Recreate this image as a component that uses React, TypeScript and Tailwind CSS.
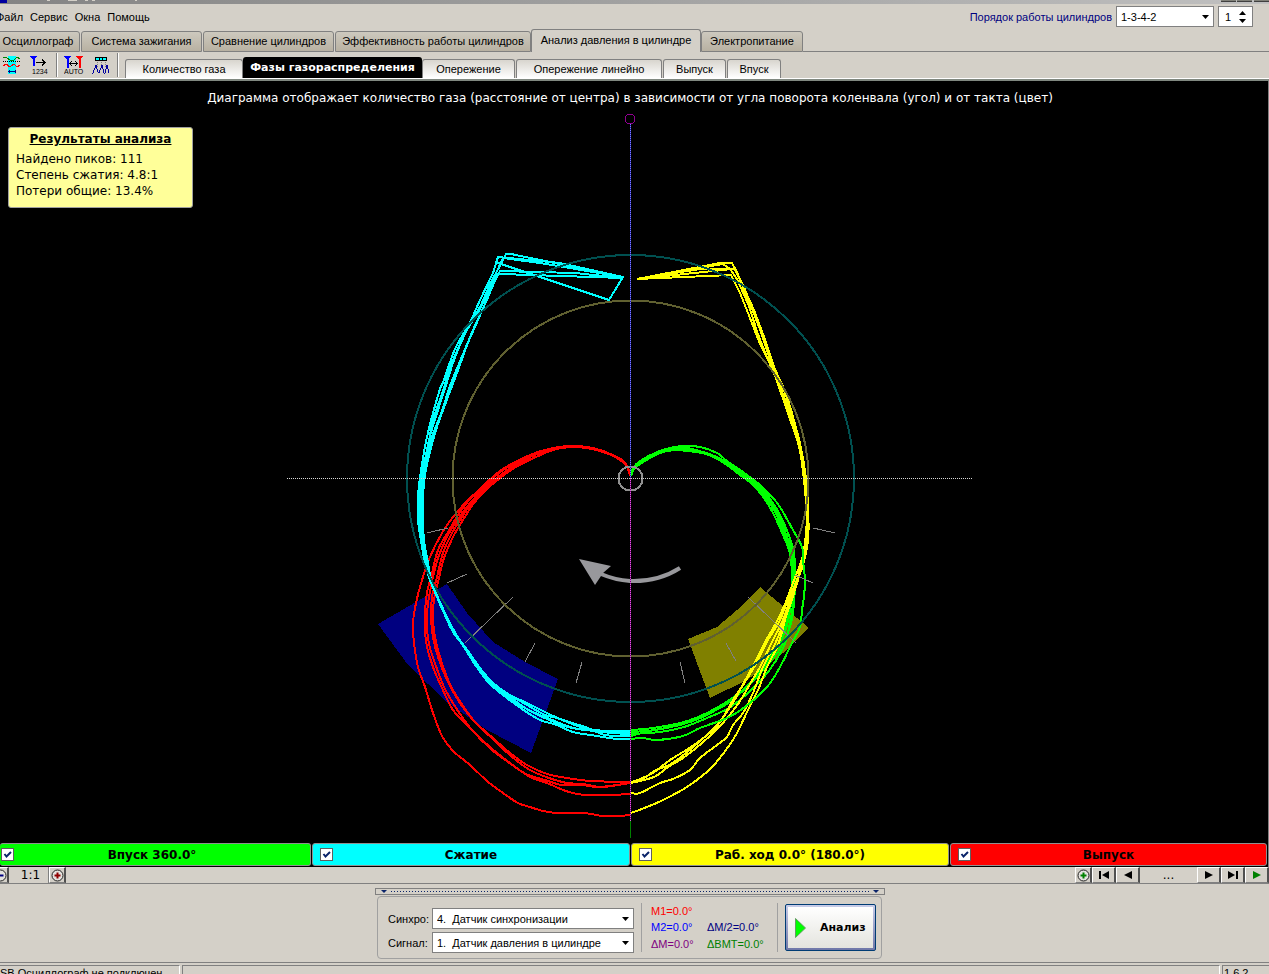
import { useState } from "react";
import type { ReactNode } from "react";

const mainTabs = [
  { label: "Осциллограф", width: "w-[84px]" },
  { label: "Система зажигания", width: "w-[121px]" },
  { label: "Сравнение цилиндров", width: "w-[131px]" },
  { label: "Эффективность работы цилиндров", width: "w-[196px]" },
  { label: "Анализ давления в цилиндре", width: "w-[170px]" },
  { label: "Электропитание", width: "w-[102px]" },
];

const subTabs = [
  { label: "Количество газа", width: "w-[118px]" },
  { label: "Фазы газораспределения", width: "w-[179px]" },
  { label: "Опережение", width: "w-[93px]" },
  { label: "Опережение линейно", width: "w-[146px]" },
  { label: "Выпуск", width: "w-[63px]" },
  { label: "Впуск", width: "w-[54px]" },
];

const strokes = [
  { label: "Впуск 360.0°", fill: "bg-[#00ff00]", first: true },
  { label: "Сжатие", fill: "bg-[#00ffff]", first: false },
  { label: "Раб. ход 0.0° (180.0°)", fill: "bg-[#ffff00]", first: false },
  { label: "Выпуск", fill: "bg-[#ff0000]", first: false },
];

const exhaust = [
  "630,476 628,468 622,460 612,455 603,451 587,447 570,446 553,449 537,454 517,463 503,470 483,487 468,500 453,517 442,533 430,557 422,580 416,603 413,623 414,643 418,667 425,687 433,713 442,736 453,751 470,765 487,781 503,793 518,803 530,807 543,811 557,813 583,813 603,816 618,816 630,815",
  "630,476 627,466 620,460 603,451 587,447 570,446 553,448 535,453 515,462 500,471 483,486 470,499 458,515 448,532 438,550 432,573 427,593 425,613 425,630 427,647 433,667 442,688 453,710 470,728 490,747 510,763 530,777 547,783 563,790 577,794 590,795 610,795 630,794",
  "630,476 627,466 622,460 603,451 587,447 570,446 553,449 538,456 517,465 505,473 489,486 474,500 462,517 452,533 443,553 437,577 432,597 431,617 433,637 438,657 447,680 458,700 473,720 493,738 510,753 527,765 547,774 567,778 590,781 630,782",
  "630,476 628,468 621,459 604,452 586,447 570,446 552,450 536,457 516,467 504,475 487,489 474,503 463,520 453,537 444,558 439,578 434,600 433,618 435,637 440,657 449,682 461,703 476,723 495,741 512,757 530,770 549,778 567,783 583,784 600,787 612,786 630,783",
  "630,476 628,468 621,460 603,452 586,448 570,447 553,450 536,457 514,466 502,474 484,488 471,502 458,519 447,537 438,558 433,577 429,597 427,614 427,630 430,648 437,669 445,689 456,708 472,730 492,750 508,762 526,774 545,780 562,785 582,785 600,787 630,783",
];

const compression = [
  "623,277 511,254 506,254 503,260 490,284 481,305 470,324 459,346 449,371 443,391 433,420 428,446 422,473 419,497 419,520 422,540 427,563 431,580 437,597 446,616 453,632 466,649 477,665 490,681 505,692 527,705 545,715 557,718 572,724 587,729 608,731 630,731",
  "623,277 560,263 498,257 493,273 480,300 469,325 455,349 444,380 439,392 427,437 420,477 418,497 418,520 421,541 425,563 430,580 437,597 444,613 452,630 464,647 474,663 488,682 503,695 522,709 540,720 557,725 573,732 597,736 617,739 630,739",
  "623,278 575,273 500,271 496,278 486,302 473,330 463,354 450,386 442,411 431,440 424,473 422,497 421,520 423,540 427,560 431,580 438,598 447,617 456,634 467,650 480,668 492,682 508,695 525,708 547,719 568,727 590,730 630,733",
  "623,278 500,274 498,274 490,292 478,320 467,345 457,373 446,402 436,430 428,460 425,475 423,497 423,520 424,540 428,563 431,580 437,597 444,613 453,630 465,648 476,664 489,679 506,693 529,704 551,715 563,720 588,728 605,735 630,736",
  "495,262 609,300 623,277 540,263 503,258 493,280 481,307 466,332 454,360 447,382 438,410 429,440 423,473 420,500 420,520 422,541 427,564 432,582 439,600 447,617 455,633 468,651 480,668 493,684 510,699 531,711 550,719 573,728 595,731 612,733 630,734",
];

const power = [
  "637,279 720,263 732,263 739,278 751,306 762,335 774,370 785,393 794,423 802,453 807,488 808,515 808,540 803,565 796,583 788,600 779,622 768,640 757,662 745,682 733,700 717,726 694,745 670,760 653,773 640,779 631,783",
  "637,279 723,264 730,269 737,279 749,306 759,337 772,369 783,394 793,423 801,450 806,489 808,510 807,540 801,562 793,583 785,604 776,623 765,642 754,664 742,686 731,706 715,727 692,748 671,764 656,770 644,778 631,782",
  "637,279 732,269 735,268 743,286 754,310 764,337 775,369 786,394 795,424 802,453 807,490 807,520 803,558 798,580 791,602 784,622 775,644 763,667 753,693 743,713 733,725 727,737 717,745 700,758 690,770 673,779 660,783 640,793 631,793",
  "637,279 731,275 740,293 750,318 760,344 772,368 780,390 791,422 800,450 805,488 808,509 808,540 802,565 795,585 789,604 784,624 778,645 767,667 758,690 748,710 737,733 728,747 719,759 708,771 687,787 663,800 647,807 631,813",
  "637,279 700,269 735,269 744,287 756,318 765,343 775,370 782,393 792,423 800,451 805,490 807,520 805,549 799,574 791,597 783,620 772,642 761,665 750,684 738,704 722,724 702,743 683,758 668,767 654,777 631,783",
];

const intake = [
  "631,476 634,467 640,461 657,452 670,448 683,446 700,447 717,453 727,461 743,472 760,485 772,497 780,507 793,530 802,547 803,560 805,580 804,596 802,610 800,627 792,643 780,667 767,687 745,707 727,718 700,728 683,736 657,740 643,738 631,739",
  "631,476 634,467 641,461 657,453 670,449 683,449 703,452 723,460 740,471 756,483 768,496 779,513 788,533 794,553 795,580 794,603 791,623 781,647 765,668 748,686 728,701 707,713 684,722 653,728 631,730",
  "631,476 633,468 642,461 656,453 668,450 687,450 703,453 723,461 739,472 754,484 766,498 776,514 784,533 791,553 793,580 791,603 787,625 778,647 762,669 745,688 727,704 705,715 683,724 655,730 631,732",
  "631,476 635,467 644,460 660,452 674,448 687,448 706,453 724,462 742,474 758,487 768,499 778,515 786,534 793,555 794,582 793,605 789,628 783,648 768,672 748,693 729,708 707,718 684,727 660,732 631,734",
  "631,476 635,468 645,461 660,453 675,450 687,451 706,454 724,463 740,475 752,484 764,498 774,515 783,535 790,554 792,580 790,604 786,625 776,648 760,672 744,690 724,705 703,717 680,725 650,731 631,736",
];

const ticks = [
  "M427 533 448 528",
  "M447 583 467 574",
  "M465 643 513 597",
  "M525 662 535 643",
  "M576 683 582 662",
  "M813 528 835 533",
  "M795 575 813 583",
  "M748 597 796 643",
  "M726 643 736 661",
  "M680 662 685 683",
];

// Straight segments for the first `straight` points, a Catmull-Rom curve after them.
function tracePath(points: string, straight: number) {
  const p = points.split(" ").map((s) => s.split(",").map(Number));
  let d = `M${p[0][0]} ${p[0][1]}`;
  for (let i = 1; i < p.length; i++) {
    if (i <= straight) {
      d += `L${p[i][0]} ${p[i][1]}`;
      continue;
    }
    const a = i - 2 < straight ? p[i - 1] : p[i - 2];
    const b = p[i - 1];
    const c = p[i];
    const e = p[Math.min(i + 1, p.length - 1)];
    d += `C${b[0] + (c[0] - a[0]) / 6} ${b[1] + (c[1] - a[1]) / 6} ${c[0] - (e[0] - b[0]) / 6} ${
      c[1] - (e[1] - b[1]) / 6
    } ${c[0]} ${c[1]}`;
  }
  return d;
}

function Traces({ data, color, straight }: { data: string[]; color: string; straight: number }) {
  return (
    <g fill="none" stroke={color} strokeWidth="2" strokeLinejoin="round">
      {data.map((points, i) => (
        <path key={i} d={tracePath(points, straight)} />
      ))}
    </g>
  );
}

function PhaseDiagram() {
  return (
    <svg
      viewBox="0 110 1268 733"
      className="block min-h-0 w-full flex-1"
      shapeRendering="crispEdges"
      role="img"
      aria-label="Фазы газораспределения"
    >
      <polygon
        fill="#000080"
        points="378,624 408,665 448,703 487,730 531,753 558,679 525,662 493,642 467,613 447,584"
      />
      <polygon fill="#808000" points="760,587 809,628 783,653 747,680 710,698 688,639 717,627 737,610" />
      <Traces data={exhaust} color="#ff0000" straight={0} />
      <Traces data={compression} color="#00ffff" straight={5} />
      <Traces data={intake} color="#00ff00" straight={0} />
      <Traces data={power} color="#ffff00" straight={4} />
      <Traces data={intake.slice(0, 1)} color="#00ff00" straight={0} />
      <g stroke="#808080" fill="none">
        {ticks.map((d) => (
          <path key={d} d={d} />
        ))}
      </g>
      <g fill="none" strokeWidth="2">
        <circle cx="630.5" cy="478.5" r="223.5" stroke="#005050" />
        <circle cx="630.5" cy="478.5" r="178" stroke="#606030" />
        <circle cx="630.5" cy="478.5" r="12" stroke="#909090" />
      </g>
      <g shapeRendering="auto">
        <polygon fill="#98989c" points="579,559 611,566 603,573 595,585" />
        <path d="M601 574Q615 580 630 581Q658 582 680 568" fill="none" stroke="#98989c" strokeWidth="4" />
      </g>
      <path d="M287 478.5H973" stroke="#d8d8d8" strokeDasharray="1 1" />
      <path d="M630.5 124V478" stroke="#2020a0" />
      <path d="M630.5 124V478" stroke="#8080ff" strokeDasharray="1 1" />
      <path d="M630.5 478V821" stroke="#700070" />
      <path d="M630.5 478V821" stroke="#e060e0" strokeDasharray="1 1" />
      <path d="M630.5 821V838" stroke="#008000" />
      <circle cx="630" cy="119" r="5" fill="none" stroke="#900090" />
    </svg>
  );
}

function DropDown({ label, options, className }: { label: string; options: string[]; className: string }) {
  return (
    <span className={`relative inline-flex ${className}`}>
      <select
        aria-label={label}
        className="h-full w-full appearance-none border border-[#808080] bg-white pl-1 text-[11px] leading-4 text-black outline-none"
      >
        {options.map((o) => (
          <option key={o}>{o}</option>
        ))}
      </select>
      <svg viewBox="0 0 7 4" className="pointer-events-none absolute top-[9px] right-[5px] h-1 w-[7px]">
        <path d="M0 0H7L3.5 4Z" />
      </svg>
    </span>
  );
}

function ToolButton({ label, children }: { label: string; children: ReactNode }) {
  return (
    <button type="button" aria-label={label} className="h-5 w-5">
      <svg viewBox="0 0 20 20" className="h-5 w-5" fill="none" shapeRendering="crispEdges">
        {children}
      </svg>
    </button>
  );
}

function NavButton({ label, children, className }: { label: string; children: ReactNode; className: string }) {
  return (
    <button
      type="button"
      aria-label={label}
      className={`flex h-4 items-center justify-center border-t border-r-2 border-b border-l border-t-white border-r-[#505050] border-b-[#808080] border-l-white ${className}`}
    >
      {children}
    </button>
  );
}

function RoundIcon({ color, plus }: { color: string; plus: boolean }) {
  return (
    <svg viewBox="0 0 13 13" className="h-[13px] w-[13px] shrink-0" fill="none">
      <circle cx="6.5" cy="6.5" r="5.5" stroke="#202020" fill="#e4e2de" />
      <path d={plus ? "M3.5 6.5H9.5M6.5 3.5V9.5" : "M3.5 6.5H9.5"} stroke={color} strokeWidth="2" />
    </svg>
  );
}

export default function App() {
  const [mainTab, setMainTab] = useState(4);
  const [subTab, setSubTab] = useState(1);
  const [cylinder, setCylinder] = useState(1);

  return (
    <div className="flex h-screen flex-col overflow-hidden bg-[#d4d0c8] font-['Liberation_Sans',sans-serif] text-[11px] leading-4 text-black">
      <div className="flex h-1 shrink-0 items-start bg-linear-to-r from-[#848484] to-[#c0c0c0]">
        <span className="h-[3px] w-[7px] bg-[#0000a0]" />
        <span className="ml-10 h-px w-[3px] bg-[#d4d0c8]" />
        <span className="ml-[18px] h-px w-[9px] bg-[#d4d0c8]" />
        <span className="ml-2 h-px w-[3px] bg-[#d4d0c8]" />
        <span className="ml-1 h-px w-[3px] bg-[#d4d0c8]" />
        <span className="ml-10 h-px w-[2px] bg-[#d4d0c8]" />
        <span className="flex-1" />
        <span className="mr-px h-[2px] w-[15px] border-b border-[#404040] bg-[#808078]" />
        <span className="mr-[2px] h-[2px] w-[15px] border-b border-[#404040] bg-[#808078]" />
        <span className="h-[2px] w-[15px] border-b border-[#404040] bg-[#808078]" />
      </div>

      <header className="flex h-[25px] shrink-0 items-center">
        <nav className="-ml-1 flex flex-1 gap-[7px] pt-px">
          <button type="button">Файл</button>
          <button type="button">Сервис</button>
          <button type="button">Окна</button>
          <button type="button">Помощь</button>
        </nav>
        <span className="mr-1 pt-px text-[#000080]">Порядок работы цилиндров</span>
        <DropDown label="Порядок работы цилиндров" options={["1-3-4-2", "1-2-4-3"]} className="h-[21px] w-[98px]" />
        <div className="mr-4 ml-1 flex h-[21px] w-[35px] border border-[#808080] bg-white">
          <input
            aria-label="Номер цилиндра"
            value={cylinder}
            onChange={(e) => setCylinder(Number(e.target.value) || 1)}
            className="min-w-0 flex-1 bg-transparent pl-1.5 outline-none"
          />
          <span className="mr-1.5 flex flex-col justify-center gap-1">
            <button type="button" aria-label="Больше" onClick={() => setCylinder(Math.min(4, cylinder + 1))}>
              <svg viewBox="0 0 7 4" className="block h-1 w-[7px]">
                <path d="M0 4H7L3.5 0Z" />
              </svg>
            </button>
            <button type="button" aria-label="Меньше" onClick={() => setCylinder(Math.max(1, cylinder - 1))}>
              <svg viewBox="0 0 7 4" className="block h-1 w-[7px]">
                <path d="M0 0H7L3.5 4Z" />
              </svg>
            </button>
          </span>
        </div>
      </header>

      <div className="flex h-[23px] shrink-0 items-end">
        <div role="tablist" className="-ml-1 flex items-end">
          {mainTabs.map((t, i) => (
            <button
              key={t.label}
              type="button"
              role="tab"
              aria-selected={i === mainTab}
              onClick={() => setMainTab(i)}
              className={`${t.width} rounded-t-[3px] border-x border-t border-[#808080] whitespace-nowrap ${
                i === mainTab ? "h-[23px] pb-[2px]" : "h-[21px] border-b bg-linear-to-b from-[#cdc9be] to-[#b8b1a2] pb-px"
              } ${i < 3 ? "mr-px" : ""}`}
            >
              {t.label}
            </button>
          ))}
        </div>
        <span className="flex-1 border-b border-[#808080]" />
      </div>

      <div className="flex h-[29px] shrink-0 items-end border-b-2 border-[#808880]">
        <div className="flex h-[27px] flex-1 items-end border-b border-white">
          <div className="flex h-[26px] items-center pb-px">
            <span className="w-[2px]" />
            <ToolButton label="Зона сигнала">
              <path d="M6 1H14V19H6Z" fill="#00ffff" />
              <path d="M1 3 4 2 8 5H12L15 2 18 4" stroke="#008000" />
              <path d="M1 11 4 9 8 12 12 9 15 12 18 10" stroke="#ff0000" />
              <path d="M1 6.5H19" stroke="#000" strokeDasharray="1 1" />
              <path d="M6 16.5H14M7 15V18M13 15V18" stroke="#000080" />
            </ToolButton>
            <span className="w-2" />
            <ToolButton label="Нумерация меток">
              <path d="M0 1H7L3.5 5ZM3 4H5V11H3Z" fill="#0000ff" />
              <path d="M6 7.5H15M12 4.5 15 7.5 12 10.5" stroke="#000" />
              <text x="2" y="19" fontSize="7" fill="#000">1234</text>
            </ToolButton>
            <span className="mx-1.5 h-6 w-[2px] border-r border-white bg-[#808080]" />
            <ToolButton label="Авторасстановка меток">
              <path d="M0 1H7L3.5 5ZM3 4H5V13H3Z" fill="#0000ff" />
              <path d="M12 1H19L15.5 5ZM15 4H17V13H15Z" fill="#ff0000" />
              <path d="M6 8.5H13M8 6 6 8.5 8 11M11 6 13 8.5 11 11" stroke="#000" />
              <text x="0" y="19" fontSize="7" fill="#000">AUTO</text>
            </ToolButton>
            <span className="w-[7px]" />
            <ToolButton label="Поиск пиков">
              <path d="M4.5 2.5H15.5V5.5H4.5Z" fill="#00ffff" stroke="#000" />
              <path d="M8.5 3V6M11.5 3V6" stroke="#000" />
              <path d="M6.5 7V13M10.5 7V13M14.5 7V13" stroke="#808080" strokeDasharray="1 1" />
              <path d="M1 18H2L5 10 7 17 8 18 11 10 13 18H14L16 10 18 18" stroke="#0000a0" />
            </ToolButton>
            <span className="mx-1.5 h-6 w-[2px] border-r border-white bg-[#808080]" />
          </div>
          <div role="tablist" className="flex items-end">
            {subTabs.map((t, i) => (
              <button
                key={t.label}
                type="button"
                role="tab"
                aria-selected={i === subTab}
                onClick={() => setSubTab(i)}
                className={`${t.width} rounded-t-[3px] whitespace-nowrap ${
                  i === subTab
                    ? "h-[21px] bg-black font-['DejaVu_Sans',sans-serif] font-bold text-white"
                    : "h-[19px] border-x border-t border-[#808080] bg-linear-to-b from-[#d8d5ce] to-white"
                } ${i > 1 ? "mr-px" : ""}`}
              >
                {t.label}
              </button>
            ))}
          </div>
        </div>
      </div>

      <main className="relative flex min-h-0 flex-1 flex-col border-r border-[#808080] bg-black font-['DejaVu_Sans',sans-serif]">
        <p className="h-[29px] shrink-0 pt-[9px] pr-2 text-center text-[12px] text-white">
          Диаграмма отображает количество газа (расстояние от центра) в зависимости от угла поворота коленвала (угол)
          и от такта (цвет)
        </p>
        <PhaseDiagram />
        <section className="absolute top-[46px] left-2 h-[81px] w-[185px] rounded-[3px] border border-[#a0a0a0] bg-[#ffff99] px-[7px] pt-[3px] text-[12px]">
          <h2 className="mb-1 text-center text-[12px] font-bold underline">Результаты анализа</h2>
          <p>Найдено пиков: 111</p>
          <p>Степень сжатия: 4.8:1</p>
          <p>Потери общие: 13.4%</p>
        </section>
        <div className="grid h-6 shrink-0 grid-cols-[311fr_318fr_318fr_317fr] gap-px pr-px pb-px">
          {strokes.map((s) => (
            <label
              key={s.label}
              className={`grid items-center rounded-[3px] border border-[#909090] ${s.fill} ${
                s.first ? "grid-cols-[13px_1fr_20px] border-l-0 pl-px" : "grid-cols-[13px_1fr_13px] px-[7px]"
              }`}
            >
              <span className="grid">
                <input
                  type="checkbox"
                  defaultChecked
                  className="peer col-start-1 row-start-1 h-[13px] w-[13px] appearance-none border border-[#606060] bg-white"
                />
                <svg
                  viewBox="0 0 13 13"
                  className="pointer-events-none invisible col-start-1 row-start-1 h-[13px] w-[13px] peer-checked:visible"
                  fill="none"
                >
                  <path d="M3.5 6 5.5 8.5 10 4" stroke="#0a246a" strokeWidth="2" />
                </svg>
              </span>
              <span className="text-center text-[12px] font-bold">{s.label}</span>
            </label>
          ))}
        </div>
      </main>

      <div className="flex h-[17px] shrink-0 border-b border-[#808080]">
        <NavButton label="Уменьшить" className="-ml-2 w-[17px]">
          <RoundIcon color="#000080" plus={false} />
        </NavButton>
        <span className="w-10 border-r border-[#808080] pl-1 text-center font-['DejaVu_Sans',sans-serif] text-[12px]">
          1:1
        </span>
        <NavButton label="Увеличить" className="w-[17px]">
          <RoundIcon color="#900000" plus />
        </NavButton>
        <span className="flex-1" />
        <NavButton label="Добавить" className="w-[17px]">
          <RoundIcon color="#008000" plus />
        </NavButton>
        <NavButton label="В начало" className="w-6">
          <svg viewBox="0 0 10 8" className="h-2 w-[10px]">
            <path d="M0 0H2V8H0ZM10 0V8L3 4Z" />
          </svg>
        </NavButton>
        <NavButton label="Назад" className="w-6">
          <svg viewBox="0 0 8 8" className="h-2 w-2">
            <path d="M8 0V8L0 4Z" />
          </svg>
        </NavButton>
        <span className="w-[57px] text-center font-['DejaVu_Sans',sans-serif] text-[12px]">...</span>
        <NavButton label="Вперёд" className="w-6">
          <svg viewBox="0 0 8 8" className="h-2 w-2">
            <path d="M0 0V8L8 4Z" />
          </svg>
        </NavButton>
        <NavButton label="В конец" className="w-6">
          <svg viewBox="0 0 10 8" className="h-2 w-[10px]">
            <path d="M8 0H10V8H8ZM0 0V8L7 4Z" />
          </svg>
        </NavButton>
        <NavButton label="Пуск" className="w-6">
          <svg viewBox="0 0 8 8" className="h-2 w-2">
            <path d="M0 0V8L8 4Z" fill="#008000" />
          </svg>
        </NavButton>
      </div>

      <div className="flex h-[79px] shrink-0 flex-col items-center border-b border-[#808080] pt-1 pr-2.5">
        <div className="flex h-[7px] w-[510px] items-center gap-1 border border-[#808080] px-[5px]">
          <svg viewBox="0 0 6 3" className="h-[3px] w-1.5">
            <path d="M0 0H6L3 3Z" fill="#0a246a" />
          </svg>
          <svg className="h-px flex-1" shapeRendering="crispEdges">
            <line x1="0" y1="0.5" x2="100%" y2="0.5" stroke="#0a246a" strokeDasharray="1 2" />
          </svg>
          <svg viewBox="0 0 6 3" className="h-[3px] w-1.5">
            <path d="M0 0H6L3 3Z" fill="#0a246a" />
          </svg>
        </div>
        <div className="mt-px flex h-[63px] w-[505px] items-center rounded-[4px] border border-[#a0a0a0] pl-2.5">
          <div className="grid grid-cols-[44px_202px] items-center gap-y-[3px] pt-1.5">
            <span>Синхро:</span>
            <DropDown label="Синхро" options={["4.\u00a0\u00a0Датчик синхронизации"]} className="h-[21px]" />
            <span>Сигнал:</span>
            <DropDown label="Сигнал" options={["1.\u00a0\u00a0Датчик давления в цилиндре"]} className="h-[21px]" />
          </div>
          <div className="ml-[7px] grid h-[49px] w-[137px] grid-cols-[56px_1fr] border-x border-[#a0a0a0] pl-[9px]">
            <span className="text-[#ff0000]">M1=0.0°</span>
            <span />
            <span className="text-[#0000ff]">M2=0.0°</span>
            <span className="text-[#000080]">ΔM/2=0.0°</span>
            <span className="text-[#800080]">ΔM=0.0°</span>
            <span className="text-[#008000]">ΔВМТ=0.0°</span>
          </div>
          <button
            type="button"
            className="ml-[7px] flex h-[47px] w-[91px] items-center rounded-[2px] border border-[#003c74] bg-linear-to-b from-[#c8cce8] to-[#7078a8] p-[2px] font-['DejaVu_Sans',sans-serif] font-bold"
          >
            <span className="flex h-full w-full items-center gap-3.5 bg-linear-to-b from-white to-[#e4e4de] pl-[7px]">
              <svg viewBox="0 0 11 20" className="h-5 w-[11px] shrink-0">
                <path d="M0.5 0.5V19.5L10.5 10Z" fill="#00ff00" stroke="#60a060" />
              </svg>
              Анализ
            </span>
          </button>
        </div>
      </div>

      <footer className="flex h-[11px] shrink-0 gap-[2px] overflow-hidden pt-[2px] leading-3">
        <span className="w-[180px] shrink-0 border-t border-r border-t-[#808080] border-r-white">
          <span className="-ml-2 block pt-px">USB Осциллограф не подключен</span>
        </span>
        <span className="flex-1 border-t border-r border-l border-t-[#808080] border-r-white border-l-[#808080]" />
        <span className="w-[47px] border-t border-l border-[#808080] pt-px pl-px">1.6.2</span>
      </footer>
    </div>
  );
}
